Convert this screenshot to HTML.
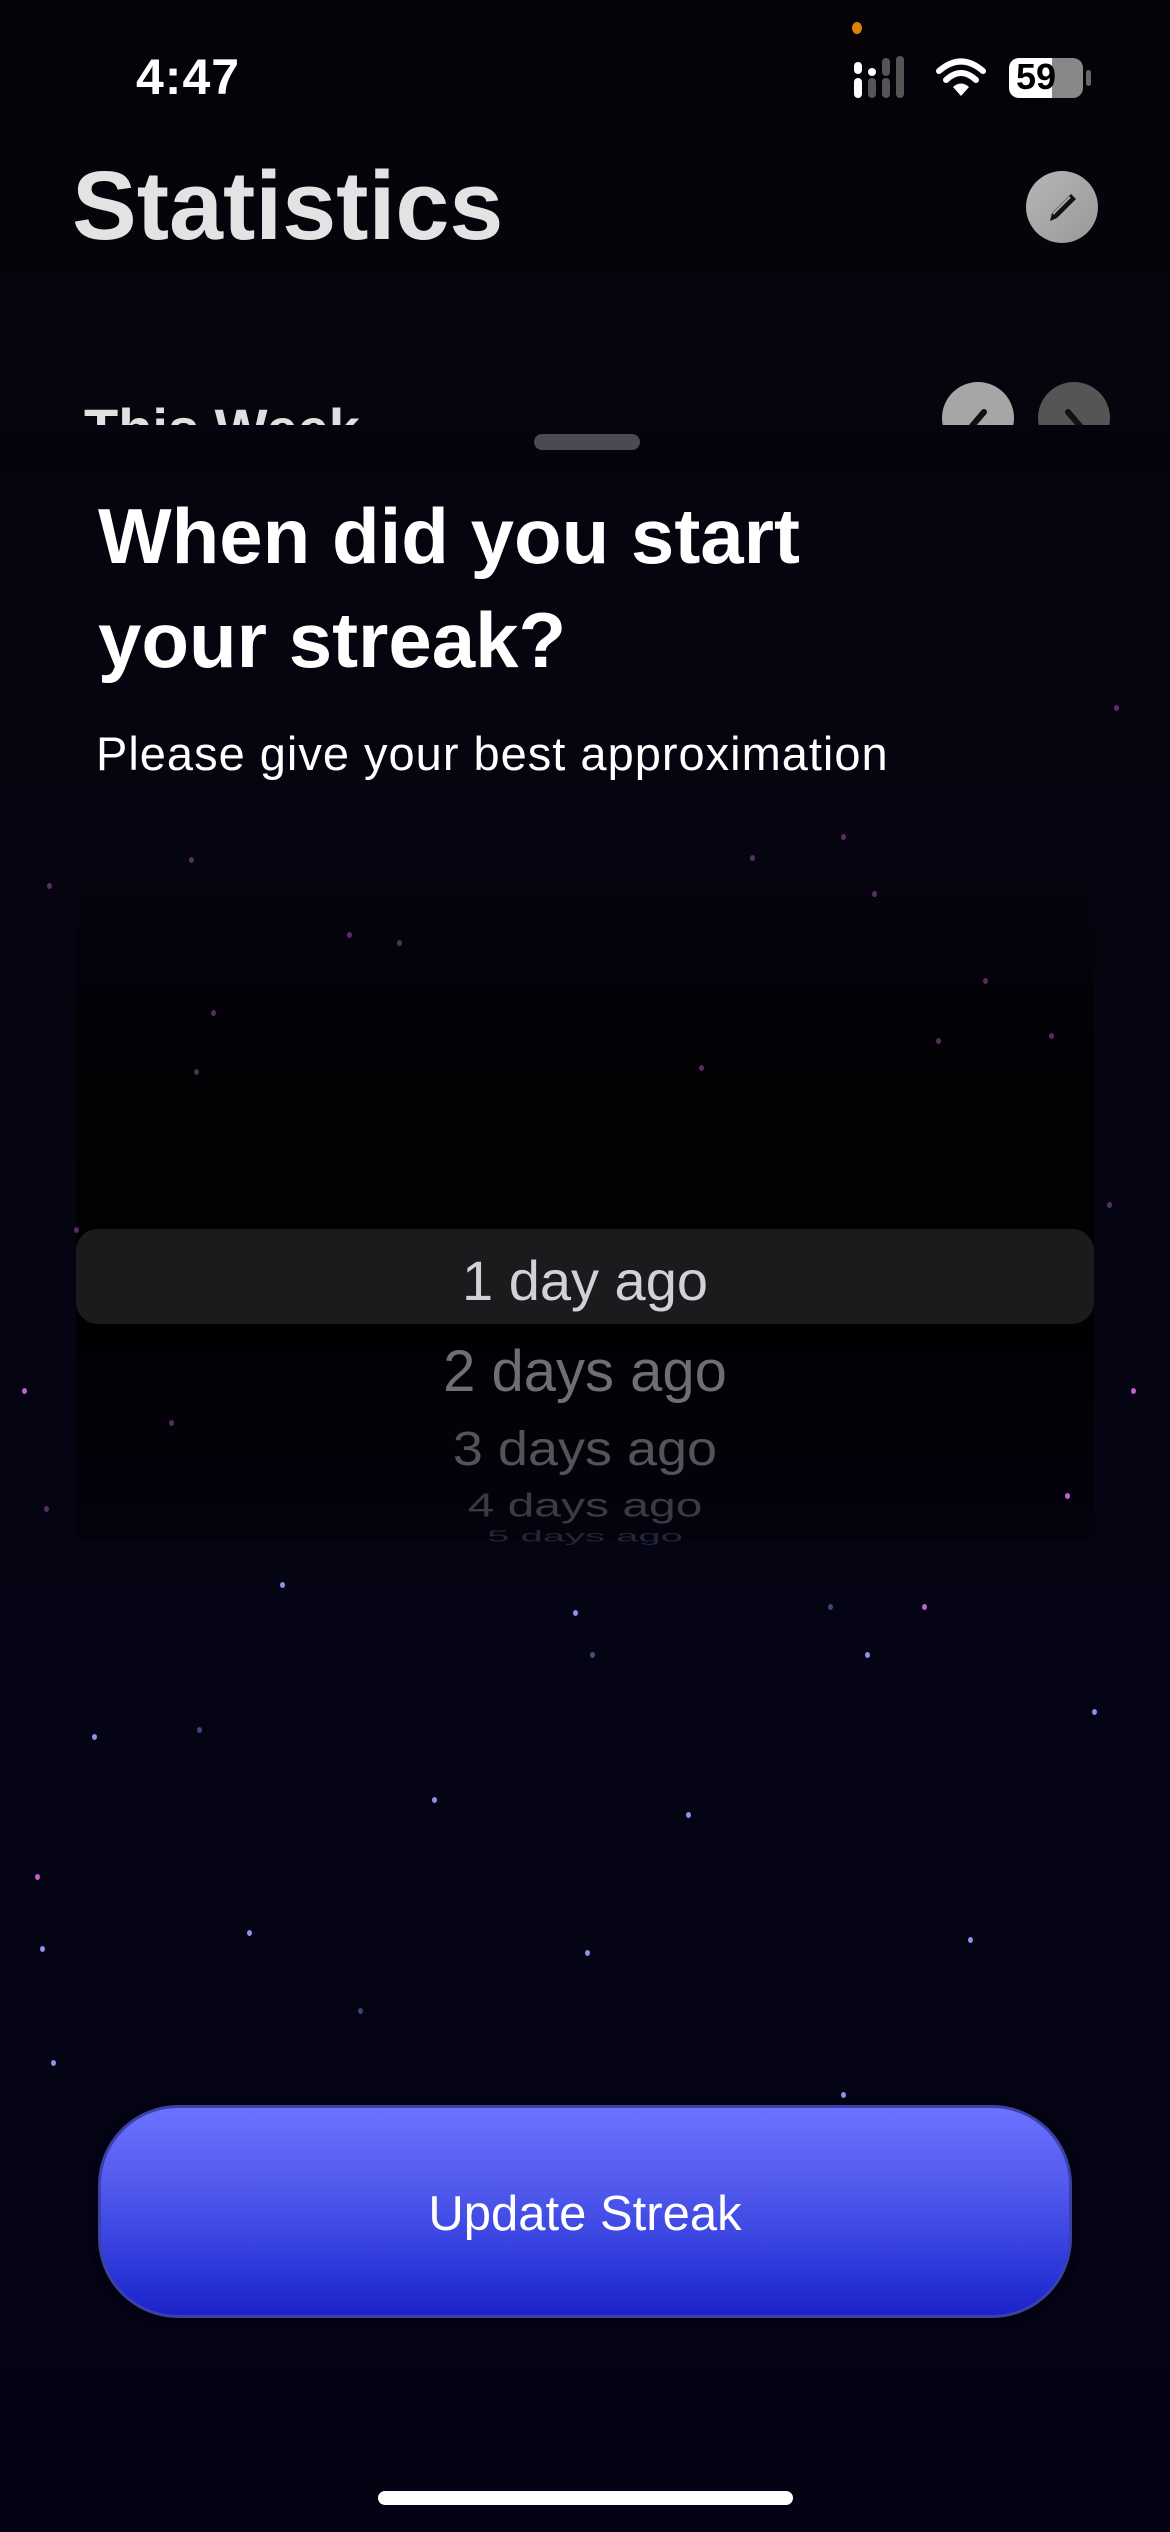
<!DOCTYPE html>
<html><head><meta charset="utf-8"><style>
*{margin:0;padding:0;box-sizing:border-box}
body{width:1170px;height:2532px;overflow:hidden;background:#050308;font-family:"Liberation Sans",sans-serif;position:relative}
.bg{position:absolute;left:0;top:0;width:1170px;height:2532px;background:linear-gradient(#050308 0%,#070511 30%,#060618 55%,#04051e 75%,#03041a 100%)}
.s{position:absolute;width:5px;height:6px;border-radius:50%;background:#8c92e8}
.p{background:#c060d0}
.d{opacity:.45}
.abs{position:absolute}
</style></head><body>
<div class="bg"></div>
<!-- status bar -->
<div class="abs" style="left:852px;top:22px;width:10px;height:12px;border-radius:50%;background:#e0820a"></div>
<div class="abs" style="left:136px;top:48px;font-size:50px;color:#fff;font-weight:600;letter-spacing:1px">4:47</div>
<svg class="abs" style="left:850px;top:56px" width="66" height="42">
<rect x="4" y="22" width="8" height="20" rx="4" fill="#fff"/><rect x="4" y="6" width="8" height="12" rx="4" fill="#fff"/>
<rect x="18" y="22" width="8" height="20" rx="4" fill="#555"/><rect x="18" y="12" width="8" height="8" rx="4" fill="#fff"/>
<rect x="32" y="22" width="8" height="20" rx="4" fill="#555"/><rect x="32" y="2" width="8" height="18" rx="4" fill="#555"/>
<rect x="46" y="0" width="8" height="42" rx="4" fill="#555"/></svg>
<svg class="abs" style="left:936px;top:58px" width="50" height="40" viewBox="0 0 50 40">
<path d="M25 38 L17 29 Q25 22 33 29Z" fill="#fff"/>
<path d="M10 22 Q25 8 40 22" stroke="#fff" stroke-width="6" fill="none" stroke-linecap="round"/>
<path d="M3 13 Q25 -6 47 13" stroke="#fff" stroke-width="6" fill="none" stroke-linecap="round"/></svg>
<div class="abs" style="left:1009px;top:58px;width:74px;height:40px;border-radius:10px;background:linear-gradient(90deg,#fff 0 58%,#888 58%)"></div>
<div class="abs" style="left:1086px;top:70px;width:5px;height:16px;border-radius:3px;background:#666"></div>
<div class="abs" style="left:1016px;top:56px;font-size:36px;font-weight:700;color:#000">59</div>
<!-- header behind sheet -->
<div class="abs" style="left:72px;top:150px;font-size:97px;font-weight:700;color:#e3e3e3">Statistics</div>
<div class="abs" style="left:1026px;top:171px;width:72px;height:72px;border-radius:50%;background:linear-gradient(135deg,#b6b6b6,#999)"></div>
<svg class="abs" style="left:1026px;top:171px" width="72" height="72"><path d="M24 50 L26 42 L45 23 L50 28 L31 47Z" fill="#111"/><path d="M27 43 L44 26" stroke="#aaa" stroke-width="2"/></svg>
<div class="abs" style="left:0;top:370px;width:1170px;height:55px;overflow:hidden">
<div class="abs" style="left:84px;top:26px;font-size:56px;font-weight:700;color:#e0e0e0">This Week</div>
<div class="abs" style="left:942px;top:12px;width:72px;height:72px;border-radius:50%;background:#a6a6a6"></div>
<svg class="abs" style="left:942px;top:12px" width="72" height="72"><path d="M42 30 L30 44" stroke="#111" stroke-width="6" stroke-linecap="round" fill="none"/></svg>
<div class="abs" style="left:1038px;top:12px;width:72px;height:72px;border-radius:50%;background:#555"></div>
<svg class="abs" style="left:1038px;top:12px" width="72" height="72"><path d="M30 30 L42 44" stroke="#111" stroke-width="6" stroke-linecap="round" fill="none"/></svg>
</div>
<!-- sheet -->
<div class="abs" style="left:0;top:425px;width:1170px;height:2107px;background:rgba(6,4,14,.55)"></div>
<div class="abs" style="left:534px;top:434px;width:106px;height:16px;border-radius:8px;background:#4a4a52"></div>
<div class="abs" style="left:98px;top:484px;font-size:78px;font-weight:700;color:#fff;line-height:104px">When did you start<br>your streak?</div>
<div class="abs" style="left:96px;top:726px;font-size:47px;letter-spacing:1px;color:#fff">Please give your best approximation</div>
<!-- picker -->
<div class="abs" style="left:76px;top:860px;width:1018px;height:680px;background:linear-gradient(rgba(0,0,0,0) 0%,rgba(0,0,0,.75) 30%,rgba(0,0,0,.8) 70%,rgba(0,0,0,.3) 100%)"></div>
<div class="abs" style="left:76px;top:1229px;width:1018px;height:95px;border-radius:22px;background:#1b1b1e"></div>
<div class="abs" style="left:76px;width:1018px;text-align:center;top:1248px;font-size:56px;color:#d2d2d6">1 day ago</div>
<div class="abs" style="left:76px;width:1018px;text-align:center;top:1338px;font-size:58px;color:#6e6e73">2 days ago</div>
<div class="abs" style="left:76px;width:1018px;text-align:center;top:1418px;font-size:54px;color:#535358;transform:scaleY(.9)">3 days ago</div>
<div class="abs" style="left:76px;width:1018px;text-align:center;top:1478px;font-size:48px;color:#3a3a44;transform:scaleY(.7)">4 days ago</div>
<div class="abs" style="left:76px;width:1018px;text-align:center;top:1514px;font-size:40px;color:#24243a;transform:scaleY(.4)">5 days ago</div>
<!-- stars -->
<span class="s p d" style="left:347px;top:932px"></span><span class="s p d" style="left:397px;top:940px"></span>
<span class="s p d" style="left:211px;top:1010px"></span><span class="s p d" style="left:189px;top:857px"></span>
<span class="s p d" style="left:47px;top:883px"></span><span class="s p d" style="left:983px;top:978px"></span>
<span class="s p d" style="left:841px;top:834px"></span><span class="s p d" style="left:1114px;top:705px"></span>
<span class="s p d" style="left:872px;top:891px"></span><span class="s p d" style="left:936px;top:1038px"></span>
<span class="s p d" style="left:1049px;top:1033px"></span><span class="s p d" style="left:1107px;top:1202px"></span>
<span class="s p d" style="left:74px;top:1227px"></span><span class="s p" style="left:22px;top:1388px"></span>
<span class="s p d" style="left:169px;top:1420px"></span><span class="s p d" style="left:44px;top:1506px"></span>
<span class="s p" style="left:1065px;top:1493px"></span><span class="s p" style="left:1131px;top:1388px"></span>
<span class="s p" style="left:35px;top:1874px"></span>
<span class="s p" style="left:922px;top:1604px"></span><span class="s p d" style="left:750px;top:855px"></span>
<span class="s p d" style="left:699px;top:1065px"></span><span class="s p d" style="left:194px;top:1069px"></span>
<span class="s" style="left:280px;top:1582px"></span><span class="s" style="left:573px;top:1610px"></span>
<span class="s" style="left:865px;top:1652px"></span><span class="s" style="left:1092px;top:1709px"></span>
<span class="s" style="left:92px;top:1734px"></span><span class="s d" style="left:197px;top:1727px"></span>
<span class="s" style="left:432px;top:1797px"></span><span class="s" style="left:686px;top:1812px"></span>
<span class="s" style="left:40px;top:1946px"></span><span class="s" style="left:247px;top:1930px"></span>
<span class="s" style="left:585px;top:1950px"></span><span class="s" style="left:968px;top:1937px"></span>
<span class="s d" style="left:358px;top:2008px"></span><span class="s" style="left:841px;top:2092px"></span>
<span class="s" style="left:51px;top:2060px"></span><span class="s d" style="left:974px;top:2121px"></span>
<span class="s" style="left:590px;top:1652px;opacity:.5"></span><span class="s d" style="left:828px;top:1604px"></span>
<!-- button -->
<div class="abs" style="left:98px;top:2105px;width:974px;height:213px;border-radius:80px;background:linear-gradient(#6c72ff 0%,#5058ec 40%,#2a36d8 80%,#1c22c8 100%);border:3px solid #3b41a8;box-shadow:0 0 8px rgba(0,0,0,.6)"></div>
<div class="abs" style="left:98px;width:974px;text-align:center;top:2186px;font-size:49px;color:#fff">Update Streak</div>
<!-- home indicator -->
<div class="abs" style="left:378px;top:2491px;width:415px;height:14px;border-radius:7px;background:#fff"></div>
</body></html>
